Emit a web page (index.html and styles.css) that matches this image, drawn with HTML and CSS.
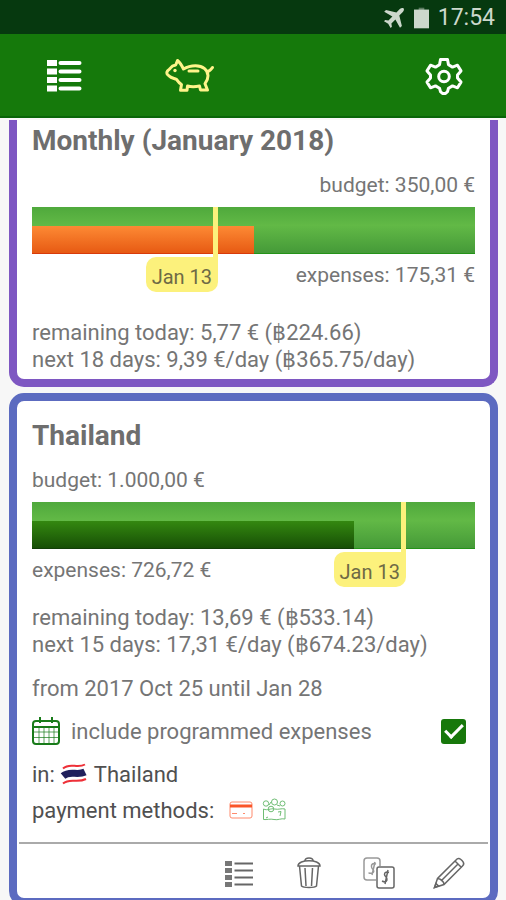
FILE: index.html
```html
<!DOCTYPE html>
<html lang="en">
<head>
<meta charset="utf-8">
<meta name="viewport" content="width=device-width, initial-scale=1">
<title>Budgets</title>
<link rel="stylesheet" href="styles.css">
</head>
<body>
<div class="app">
  <div class="status">
    <svg class="plane" viewBox="0 0 22 22" aria-hidden="true"><path d="M20.500 1.300c-1-.8-2.600-.3-3.700.8l-3.400 3.400L3 3 1.200 4.800l8.200 4.700-4 4-3.200-.5L1 14.200l4.200 2.500L7.600 21l1.300-1.200-.5-3.300 4-4 4.600 8.300 1.900-1.800L16.300 8.500l3.500-3.500c1.100-1.100 1.600-2.800.7-3.700z"/></svg>
    <svg class="battery" viewBox="0 0 16 22" aria-hidden="true"><path class="dim" d="M5 0h6v3H5z"/><path d="M0 2h16v20H0z"/></svg>
    <span>17:54</span>
  </div>
  <header class="topbar">
    <button class="nav" aria-label="List">
      <svg class="list-big" viewBox="0 0 36 34"><path d="M0 1h10v6H0zM0 9.500h10v6H0zM0 18h10v6H0zM0 26.500h10v6H0z"/><path class="rules" d="M13.500 4h19M13.500 12.500h19M13.500 21h19M13.500 29.500h19"/></svg>
    </button>
    <button class="nav" aria-label="Budgets">
      <svg class="pig" viewBox="0 0 50 36"><path d="M19.500 11c4-2.500 8-3.300 12-3.300 7.500 0 12.500 4.300 12.500 10 0 4-1.500 6-3 8l2.500 6.300h-7l-1-4c-5 1-8 1-12 0l-.5 4.300h-6.500l1-5.800c-2-1.200-3.500-3-5-5.200-2.500-1-5.500-1.200-7-3C2.800 16.500 2 15 3.500 13c1.200-1.500 2-1.500 3-3 1-1.500 3-2.600 5.200-3L13.500 2.500c2.500 2 4 4.500 6 8.500zM43.500 13.500c2 0 3-1.500 5-4"/><path d="M25 13h9"/><circle class="eye" cx="11" cy="12.500" r="1.700"/></svg>
    </button>
    <button class="nav settings" aria-label="Settings">
      <svg class="gear" viewBox="0 0 38 38"><path d="M15.500 2.500h7l1 5.300 4 2.300 5-1.900 3.500 5.700-3.500 4v3.200l3.500 4-3.500 5.700-5-1.900-4 2.300-1 3.500-2 1.800h-3l-2-1.800-1-3.500-4-2.300-5 1.900L2 25.100l3.500-4v-3.200l-3.500-4 3.500-5.700 5 1.900 4-2.300z"/><circle cx="19" cy="19.500" r="5.300"/></svg>
    </button>
  </header>

  <main class="cards">
    <section class="card monthly">
      <h2>Monthly (January 2018)</h2>
      <p class="amount right">budget: 350,00 €</p>
      <div class="bar">
        <div class="fill over" style="width:50.1%"></div>
        <div class="marker" style="right:58%"><span class="flag">Jan 13</span></div>
      </div>
      <p class="amount right">expenses: 175,31 €</p>
      <p class="summary">remaining today: 5,77 € (฿224.66)<br>next 18 days: 9,39 €/day (฿365.75/day)</p>
    </section>

    <section class="card trip">
      <h2>Thailand</h2>
      <p class="amount">budget: 1.000,00 €</p>
      <div class="bar">
        <div class="fill" style="width:72.7%"></div>
        <div class="marker" style="right:15.6%"><span class="flag">Jan 13</span></div>
      </div>
      <p class="amount">expenses: 726,72 €</p>
      <p class="summary">remaining today: 13,69 € (฿533.14)<br>next 15 days: 17,31 €/day (฿674.23/day)</p>
      <p class="period">from 2017 Oct 25 until Jan 28</p>
      <div class="option">
        <svg class="calendar" viewBox="0 0 28 28" aria-hidden="true"><path class="grid" d="M2 15h24M2 20.500h24M7 11v15M12 11v15M17 11v15M22 11v15"/><path d="M1 10h26M8 0v6M20 0v6"/><rect x="1" y="4" width="26" height="23" rx="3"/></svg>
        <label for="programmed">include programmed expenses</label>
        <input type="checkbox" id="programmed" checked>
      </div>
      <p class="detail place">in:
        <svg class="thai" viewBox="0 0 26 22" aria-hidden="true"><path class="red" d="M2 5.500C9-1 16 6 24 1.500M2 20.500c7-6 14 0 23-4.500"/><path class="blue" d="M2 13c7-6 14 0 22-4"/></svg>
        Thailand</p>
      <p class="detail methods">payment methods:
        <svg class="credit" viewBox="0 0 24 18" aria-hidden="true"><rect x="1" y="1" width="22" height="16" rx="2"/><path d="M1 5h22" class="stripe"/><path d="M3 12.500h5M14 12.500h2" /></svg>
        <svg class="cash" viewBox="0 0 24 24" aria-hidden="true"><path d="M1.500 11c4 2 7-1 11 0s7-1 10.500 0v10c-4-1-7 1.500-11 .5s-7 .5-10.500 0zM16 14l3-.5-1 4.500M4 20l2-1"/><circle cx="4" cy="5.500" r="2.700"/><circle cx="12.500" cy="4" r="3"/><circle cx="20.500" cy="5.500" r="2.500"/><circle cx="9" cy="11" r="2.800"/><path d="M7 7l2-3M15 7l3 1"/></svg>
      </p>
      <div class="tools">
        <button aria-label="Show expenses"><svg viewBox="0 0 32 32"><path class="squares" d="M2 4h7v5H2zM2 11h7v5H2zM2 18h7v5H2zM2 25h7v5H2z"/><path d="M11.500 6.500H30M11.500 13.500H30M11.500 20.500H30M11.500 27.500H30"/></svg></button>
        <button aria-label="Delete"><svg class="thin" viewBox="0 0 32 32"><path d="M6.500 9l2 20c2 2 13 2 15 0l2-20M12 11l1 18M19.500 11l-1 18M12 4c0-4 8-4 8 0"/><path d="M5 9c0-7 22-7 22 0z"/></svg></button>
        <button aria-label="Copy"><svg class="thin" viewBox="0 0 32 32"><path class="back" d="M13 23H4c-2 0-3-1-3-3V4c0-2 1-3 3-3h10c2 0 3 1 3 3v5M13 7c-3-1-5 0-4.500 3s3.500 3 2 5-3 1-5 1M12 5L9 18"/><rect x="14" y="10" width="17" height="21" rx="2"/><path d="M26 15.500c-3-1-4.500 0-4.500 2s3.500 3 2.500 5.500-3 2-5 1M25 13l-3 14"/></svg></button>
        <button aria-label="Edit"><svg class="thin" viewBox="0 0 32 32"><path d="M1.500 30.500l3-9L23 3c2-2.500 4-1.500 6 .5s2.500 3.500.5 5.500L11 27.500zM4.500 21.500c3 0 6.500 3 6.500 6M8 24L25.500 6.500M22 4l6 6"/><path d="M1.500 30.500l1.500-4 2.500 2.500z"/></svg></button>
      </div>
    </section>
  </main>
</div>
</body>
</html>
```

FILE: styles.css
```css
* { box-sizing: border-box; }
body { margin: 0; font-family: Roboto, "Liberation Sans", sans-serif; color: #757575; background: #f7f7f7; }
h2, p { margin: 0; }
svg { display: block; fill: none; stroke: currentColor; overflow: visible; }
button { border: 0; padding: 0; background: none; color: inherit; cursor: pointer; }

.app { display: flex; flex-direction: column; height: 100vh; overflow: hidden; }

.status { flex: none; display: flex; align-items: center; justify-content: flex-end; gap: 9px; height: 34px; padding: 2px 11px 0 0; background: #06390f; color: #ccd8cc; font-size: 23px; line-height: 32px; }
.status svg { fill: currentColor; stroke: none; }
.plane { width: 22px; height: 22px; }
.battery { width: 15px; height: 22px; }
.battery .dim { fill: #5c7c60; }

.topbar { flex: none; display: flex; align-items: center; height: 84px; padding: 2px 43px 0 46px; gap: 80px; background: #15790b; border-bottom: 2px solid #086407; color: #fff; }
.nav { display: flex; }
.nav.settings { margin-left: auto; }
.list-big { width: 38px; height: 34px; fill: currentColor; }
.list-big path { stroke: none; }
.list-big .rules { stroke: currentColor; stroke-width: 4; stroke-linecap: round; }
.pig { width: 50px; height: 36px; color: #fff48a; stroke-width: 3; stroke-linejoin: round; stroke-linecap: round; }
.pig .eye { fill: currentColor; stroke: none; }
.gear { width: 38px; height: 38px; stroke-width: 3; stroke-linejoin: round; }

.cards { flex: 1; min-height: 0; overflow: hidden; padding: 2px 8px 0 9px; }
.card { border: 8px solid; border-radius: 15px; padding: 0 15px; background: #fff; }
.monthly { border-color: #7e57c2; border-top: 0; border-top-left-radius: 0; border-top-right-radius: 0; padding-bottom: 6px; margin-bottom: 6px; }
.trip { border-color: #5c6bc0; padding-top: 14px; padding-bottom: 0; }

h2 { font-size: 28px; line-height: 42px; font-weight: 700; color: #6e6e6e; }
.amount { font-size: 21px; line-height: 28px; margin-top: 9px; }
.right { text-align: right; }
.bar { position: relative; display: flex; align-items: flex-end; height: 47px; margin-top: 8px; background: linear-gradient(#4fa93c, #62b946 40%, #459a38); border-bottom: 1px solid #249318; }
.bar + .amount { margin-top: 7px; }
.fill { height: 28px; margin-bottom: -1px; background: linear-gradient(#348810, #174f06); border-bottom: 1px solid #123f08; }
.fill.over { background: linear-gradient(#fd8a34, #e75a13); border-color: #d83b0a; }
.marker { position: absolute; top: 0; bottom: -6px; width: 5px; background: #fcf17c; }
.flag { position: absolute; top: 50px; right: 0; height: 35px; padding: 0 6px; border-radius: 10px 0 10px 10px; background: #fcf17c; font-size: 20px; line-height: 40px; white-space: nowrap; color: #6e6a45; }

.summary { margin-top: 30px; font-size: 22px; line-height: 27px; }
.trip .summary { margin-top: 20px; }
.period { margin-top: 17px; font-size: 22px; line-height: 27px; }
.option { display: flex; align-items: center; height: 40px; margin-top: 9px; padding-right: 9px; font-size: 22px; }
.calendar { width: 28px; height: 28px; margin-right: 11px; color: #187b19; stroke-width: 2; }
.calendar .grid { stroke-width: 1; opacity: .7; }
.option input { appearance: none; width: 25px; height: 25px; margin: 0 0 0 auto; border-radius: 3px; background: #17780b; display: grid; place-items: center; }
.option input:checked::before { content: ""; box-sizing: border-box; width: 18px; height: 10px; border: solid #fff; border-width: 0 0 3px 3px; transform: translateY(-2px) rotate(-45deg); }
.detail { display: flex; align-items: center; height: 36px; font-size: 22px; color: #505050; }
.place { margin-top: 5px; }
.thai { width: 26px; height: 22px; margin: 0 7px 0 6px; }
.thai .red { stroke: #ee3038; stroke-width: 2; }
.thai .blue { stroke: #20205c; stroke-width: 7; }
.credit { width: 24px; height: 18px; margin-left: 15px; color: #ff8a6c; stroke-width: 1; }
.credit .stripe { stroke: #fa5528; stroke-width: 3; }
.cash { width: 24px; height: 24px; margin-left: 9px; color: #6fbd74; stroke-width: 1; }
.tools { display: flex; justify-content: flex-end; align-items: center; gap: 38px; height: 56px; margin: 14px -13px 0; padding: 4px 23px 0 0; border-top: 2px solid #aaa; color: #666; }
.tools svg { width: 32px; height: 32px; stroke-width: 2; }
.tools .thin { stroke-width: 1.5; }
.tools .squares { fill: #777; stroke: none; }
.tools .back { stroke: #999; }
```
